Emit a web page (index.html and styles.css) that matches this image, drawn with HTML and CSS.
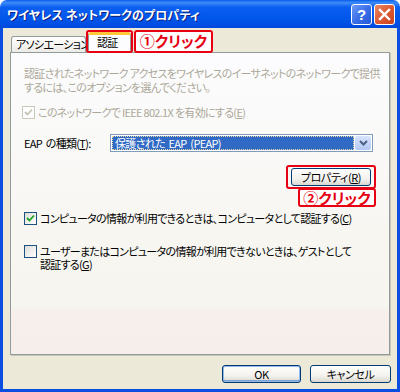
FILE: index.html
```html
<!DOCTYPE html>
<html>
<head>
    <title>ワイヤレス ネットワークのプロパティ</title>
    <link rel="stylesheet" href="styles.css">
</head>
<body>
    <div class="window">
        <div class="titlebar">
            <span class="title">ワイヤレス ネットワークのプロパティ</span>
            <div class="caption-buttons">
                <span class="cap help">?</span>
                <span class="cap close">
                    <svg width="13" height="13" viewBox="0 0 13 13"><path d="M2 2 L11 11 M11 2 L2 11" stroke="#fff" stroke-width="2.4" stroke-linecap="square"/></svg>
                </span>
            </div>
        </div>

        <div class="body">
            <div class="tabs">
                <div class="tab">アソシエーション</div>
                <div class="mark">
                    <div class="tab active">認証</div>
                </div>
                <div class="callout">①クリック</div>
            </div>

            <div class="page">
                <p class="desc">認証されたネットワーク アクセスをワイヤレスのイーサネットのネットワークで提供<br>するには、このオプションを選んでください。</p>

                <label class="check disabled">
                    <span class="box checked">
                        <svg width="9" height="9" viewBox="0 0 9 9"><path d="M1 4 L3.5 6.5 L8 1.5" fill="none" stroke="#c6c3b5" stroke-width="1.8"/></svg>
                    </span>
                    <span>このネットワークで IEEE 802.1X を有効にする(<u>E</u>)</span>
                </label>

                <div class="eap-row">
                    <span class="eap-label">EAP の種類(<u>T</u>):</span>
                    <div class="select">
                        <span class="selected">保護された EAP (PEAP)</span>
                        <span class="arrow">
                            <svg width="9" height="6" viewBox="0 0 9 6"><path d="M1 1 L4.5 4.5 L8 1" fill="none" stroke="#4d6185" stroke-width="2"/></svg>
                        </span>
                    </div>
                </div>

                <div class="prop-group">
                    <div class="mark">
                        <button class="btn prop">プロパティ(<u>R</u>)</button>
                    </div>
                    <div class="callout small">②クリック</div>
                </div>

                <label class="check first">
                    <span class="box checked">
                        <svg width="9" height="9" viewBox="0 0 9 9"><path d="M1 4 L3.5 6.5 L8 1.5" fill="none" stroke="#21a121" stroke-width="1.8"/></svg>
                    </span>
                    <span>コンピュータの情報が利用できるときは、コンピュータとして認証する(<u>C</u>)</span>
                </label>

                <label class="check second">
                    <span class="box"></span>
                    <span class="lines">
                        <span>ユーザーまたはコンピュータの情報が利用できないときは、ゲストとして</span>
                        <span>認証する(<u>G</u>)</span>
                    </span>
                </label>
            </div>

            <div class="buttons">
                <button class="btn default">OK</button>
                <button class="btn">キャンセル</button>
            </div>
        </div>
    </div>
</body>
</html>
```

FILE: styles.css
```css
:root {
    --xp-blue: #0a4fe0;
    --face: #ece9d8;
    --tab-border: #919b9c;
    --red: #e60012;
}

body {
    margin: 0;
    font-family: "Noto Sans CJK JP", "Liberation Sans", sans-serif;
    font-size: 11px;
    font-feature-settings: "palt";
    letter-spacing: -0.7px;
    color: #000;
    background: #fff;
}

.window {
    width: 400px;
    height: 392px;
    display: flex;
    flex-direction: column;
}

.titlebar {
    height: 28px;
    flex: none;
    display: flex;
    justify-content: space-between;
    align-items: center;
    padding: 1px 5px 0 7px;
    box-sizing: border-box;
    border-radius: 7px 7px 0 0;
    background: linear-gradient(#0a5ee8 0%, #3d8cfb 10%, #0c5ff0 25%, #0055ea 70%, #0048dc 100%);
}

.title {
    color: #fff;
    font-weight: bold;
    font-size: 12px;
    letter-spacing: 0.1px;
    text-shadow: 1px 1px 0 #0a1e80;
}

.caption-buttons {
    display: flex;
    gap: 2px;
}

.cap {
    width: 19px;
    height: 19px;
    border: 1px solid #fff;
    border-radius: 3px;
    display: flex;
    align-items: center;
    justify-content: center;
    color: #fff;
    font-family: "Liberation Sans", sans-serif;
    font-weight: bold;
    font-size: 15px;
    letter-spacing: 0;
}

.help {
    background: linear-gradient(135deg, #6e9cf8 0%, #3a6fe8 50%, #2458d8 100%);
}

.close {
    background: linear-gradient(135deg, #e98866 0%, #dd5a34 50%, #c9421b 100%);
}

.body {
    flex: 1;
    display: flex;
    flex-direction: column;
    background: var(--face);
    border: 3px solid var(--xp-blue);
    border-top: none;
    padding: 2px 7px 6px 7px;
}

/* tabs */
.tabs {
    display: flex;
    align-items: flex-end;
    height: 22px;
    position: relative;
    z-index: 1;
}

.tab {
    margin-left: 1px;
    height: 16px;
    width: 75px;
    box-sizing: border-box;
    border: 1px solid var(--tab-border);
    border-bottom: none;
    border-radius: 3px 3px 0 0;
    background: linear-gradient(#fff, #ecebe6);
    padding-left: 4px;
    line-height: 15px;
    white-space: nowrap;
}

.tab.active {
    margin: 0;
    width: 43px;
    height: 19px;
    padding-left: 8px;
    border-top: 3px solid #ffc83c;
    background: #fcfcfe;
    line-height: 15px;
}

.mark {
    border: 2px solid var(--red);
    border-radius: 3px;
    margin-bottom: -1px;
    background: #fff;
}

.tabs .mark {
    height: 23px;
    box-sizing: border-box;
    display: flex;
    align-items: flex-end;
}

.callout {
    margin-left: 1px;
    margin-bottom: -1px;
    width: 79px;
    height: 23px;
    box-sizing: border-box;
    border: 2px solid var(--red);
    border-radius: 3px;
    background: #fff;
    color: var(--red);
    font-weight: bold;
    font-size: 15px;
    letter-spacing: 0;
    line-height: 18px;
    text-align: center;
}

/* page */
.page {
    flex: 1;
    border: 1px solid var(--tab-border);
    box-shadow: 1px 1px 0 #c8c5b6;
    padding: 13px 13px 0 13px;
    background: linear-gradient(#fcfcfe 0%, #f7f6f1 60%, #f6f5f0 84%, #f7efeb 86%, #f6eeea 100%);
    display: flex;
    flex-direction: column;
    align-items: flex-start;
}

.desc {
    margin: 0;
    line-height: 14px;
    color: #aca899;
    white-space: nowrap;
}

.check {
    display: flex;
    align-items: flex-start;
    gap: 3px;
    line-height: 13px;
    white-space: nowrap;
}

.box {
    width: 11px;
    height: 11px;
    flex: none;
    border: 1px solid #1c5180;
    background: linear-gradient(135deg, #dcdcd7, #fff);
    display: flex;
    align-items: center;
    justify-content: center;
}

.check.disabled {
    margin: 12px 0 0 -2px;
    color: #aca899;
}

.check.disabled .box {
    border-color: #cac8bb;
    background: #fff;
}

.check.first {
    margin-top: 5px;
}

.check.second {
    margin-top: 20px;
}

.lines {
    display: flex;
    flex-direction: column;
}

.eap-row {
    margin-top: 15px;
    display: flex;
    align-items: center;
    align-self: stretch;
}

.eap-label {
    width: 86px;
    flex: none;
    word-spacing: 2px;
}

.select {
    flex: 1;
    margin-right: 3px;
    height: 18px;
    box-sizing: border-box;
    border: 1px solid #7f9db9;
    background: #fff;
    display: flex;
    align-items: center;
    padding: 1px;
    gap: 1px;
}

.selected {
    flex: 1;
    height: 14px;
    box-sizing: border-box;
    background: #316ac5;
    border: 1px dotted #e8d9a0;
    color: #fff;
    line-height: 12px;
    padding-left: 2px;
    word-spacing: 2px;
}

.arrow {
    width: 16px;
    height: 14px;
    border-radius: 2px;
    background: linear-gradient(#d8e4fd, #b4c8f5);
    display: flex;
    align-items: center;
    justify-content: center;
}

.prop-group {
    margin-top: 13px;
    align-self: flex-end;
    display: flex;
    flex-direction: column;
    align-items: flex-end;
}

.prop-group .mark {
    margin: 0;
    padding: 1px 3px;
    background: transparent;
}

.prop-group .callout.small {
    margin: -1px 0 0 0;
    width: 78px;
    height: 19px;
    line-height: 15px;
}

/* buttons */
.btn {
    font-family: inherit;
    font-size: 11px;
    font-feature-settings: "palt";
    letter-spacing: -0.4px;
    height: 18px;
    padding: 0;
    border: 1px solid #003c74;
    border-radius: 3px;
    background: linear-gradient(#fff 0%, #f3f2ee 60%, #dad8cf 100%);
    color: #000;
    line-height: 14px;
}

.btn.prop {
    width: 80px;
    display: block;
}

.buttons {
    margin-top: 10px;
    margin-right: -1px;
    display: flex;
    justify-content: flex-end;
    gap: 9px;
}

.buttons .btn {
    width: 81px;
}

.btn.default {
    width: 79px;
    box-shadow: inset 0 0 0 1px #98b8ea, inset 0 -1px 0 1px #7da2ce;
}
```
